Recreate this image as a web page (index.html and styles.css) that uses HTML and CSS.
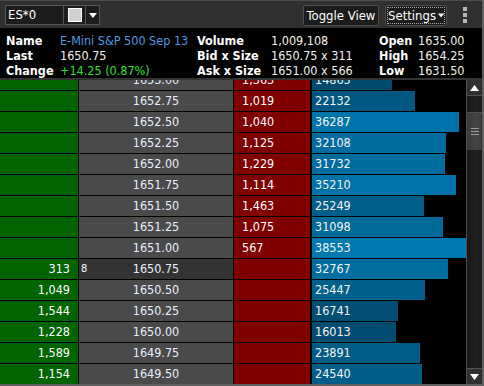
FILE: index.html
```html
<!DOCTYPE html>
<html>
<head>
<meta charset="utf-8">
<link rel="stylesheet" href="styles.css">
</head>
<body>
<div class="window">
  <div class="toolbar">
    <div class="symbol-box">
      <span class="symbol">ES*0</span>
      <span class="swatch-cell"><span class="swatch"></span></span>
      <span class="drop-cell"><svg width="8" height="5" viewBox="0 0 8 5"><path d="M0 0H8L4 5Z" fill="#fff"/></svg></span>
    </div>
    <div class="spacer"></div>
    <button class="btn toggle">Toggle View</button>
    <button class="btn settings"><span class="focus">Settings<svg width="8" height="5" viewBox="0 0 8 5"><path d="M0 0H8L4 5Z" fill="#fff"/></svg></span></button>
    <div class="kebab"><span></span><span></span><span></span></div>
  </div>
  <div class="info">
    <span class="lbl">Name</span><span class="val name">E-Mini S&amp;P 500 Sep 13</span>
    <span class="lbl">Volume</span><span class="val">1,009,108</span>
    <span class="lbl">Open</span><span class="val">1635.00</span>
    <span class="lbl">Last</span><span class="val">1650.75</span>
    <span class="lbl">Bid x Size</span><span class="val">1650.75 x 311</span>
    <span class="lbl">High</span><span class="val">1654.25</span>
    <span class="lbl">Change</span><span class="val up">+14.25 (0.87%)</span>
    <span class="lbl">Ask x Size</span><span class="val">1651.00 x 566</span>
    <span class="lbl">Low</span><span class="val">1631.50</span>
  </div>
  <div class="ladder">
    <div class="viewport">
      <div class="rows">
        <div class="bid"></div><div class="price">1653.00</div><div class="ask">1,363</div><div class="vol"><span class="bar" style="width:80px;background:rgb(0,74,110)">14865</span></div>
        <div class="bid"></div><div class="price">1652.75</div><div class="ask">1,019</div><div class="vol"><span class="bar" style="width:103px;background:rgb(0,88,130)">22132</span></div>
        <div class="bid"></div><div class="price">1652.50</div><div class="ask">1,040</div><div class="vol"><span class="bar" style="width:147px;background:rgb(0,116,170)">36287</span></div>
        <div class="bid"></div><div class="price">1652.25</div><div class="ask">1,125</div><div class="vol"><span class="bar" style="width:134px;background:rgb(0,107,158)">32108</span></div>
        <div class="bid"></div><div class="price">1652.00</div><div class="ask">1,229</div><div class="vol"><span class="bar" style="width:133px;background:rgb(0,107,157)">31732</span></div>
        <div class="bid"></div><div class="price">1651.75</div><div class="ask">1,114</div><div class="vol"><span class="bar" style="width:144px;background:rgb(0,114,167)">35210</span></div>
        <div class="bid"></div><div class="price">1651.50</div><div class="ask">1,463</div><div class="vol"><span class="bar" style="width:112px;background:rgb(0,94,139)">25249</span></div>
        <div class="bid"></div><div class="price">1651.25</div><div class="ask">1,075</div><div class="vol"><span class="bar" style="width:131px;background:rgb(0,106,155)">31098</span></div>
        <div class="bid"></div><div class="price">1651.00</div><div class="ask">567</div><div class="vol"><span class="bar" style="width:154px;background:rgb(0,120,176)">38553</span></div>
        <div class="bid">313</div><div class="price last"><span class="trade">8</span>1650.75</div><div class="ask"></div><div class="vol"><span class="bar" style="width:136px;background:rgb(0,109,160)">32767</span></div>
        <div class="bid">1,049</div><div class="price">1650.50</div><div class="ask"></div><div class="vol"><span class="bar" style="width:113px;background:rgb(0,95,139)">25447</span></div>
        <div class="bid">1,544</div><div class="price">1650.25</div><div class="ask"></div><div class="vol"><span class="bar" style="width:86px;background:rgb(0,78,115)">16741</span></div>
        <div class="bid">1,228</div><div class="price">1650.00</div><div class="ask"></div><div class="vol"><span class="bar" style="width:84px;background:rgb(0,76,113)">16013</span></div>
        <div class="bid">1,589</div><div class="price">1649.75</div><div class="ask"></div><div class="vol"><span class="bar" style="width:108px;background:rgb(0,92,135)">23891</span></div>
        <div class="bid">1,154</div><div class="price">1649.50</div><div class="ask"></div><div class="vol"><span class="bar" style="width:110px;background:rgb(0,93,137)">24540</span></div>
      </div>
    </div>
    <div class="scrollbar">
      <div class="sb-btn"><svg width="9" height="6" viewBox="0 0 9 6"><path d="M0 6H9L4.5 0Z" fill="#fff"/></svg></div>
      <div class="sb-track">
        <div class="sb-gap"></div>
        <div class="sb-thumb"><span></span><span></span><span></span></div>
      </div>
      <div class="sb-btn"><svg width="9" height="6" viewBox="0 0 9 6"><path d="M0 0H9L4.5 6Z" fill="#fff"/></svg></div>
    </div>
  </div>
</div>
</body>
</html>
```
FILE: styles.css
```css
* { box-sizing: border-box; }
html, body { margin: 0; padding: 0; background: #000; }
body {
  font-family: "DejaVu Sans Condensed", "DejaVu Sans", sans-serif;
  font-size: 12.5px;
  color: #f0f0f0;
}
.window {
  width: 484px;
  height: 386px;
  border-right: 2px solid #5e5e5e;
  border-bottom: 2px solid #5e5e5e;
  display: flex;
  flex-direction: column;
  background: #000;
}
.toolbar {
  height: 28px;
  flex: 0 0 28px;
  background: #303030;
  border-top: 1px solid #4c4c4c;
  display: flex;
  align-items: center;
  padding: 0 0 0 5px;
}
.symbol-box {
  display: flex;
  height: 20px;
  margin-top: 1px;
  border: 1px solid #555;
  background: #1c1c1c;
}
.symbol {
  width: 58px;
  padding-left: 2px;
  line-height: 18px;
  font-size: 13px;
  color: #fff;
  border-right: 1px solid #555;
}
.swatch-cell {
  width: 22px;
  display: flex;
  align-items: center;
  justify-content: center;
  border-right: 1px solid #555;
}
.swatch {
  width: 14px;
  height: 14px;
  background: #d0d0d0;
  border: 1px solid #fff;
}
.drop-cell {
  width: 13px;
  display: flex;
  align-items: center;
  justify-content: center;
}
.spacer { flex: 1; }
.btn {
  font-family: inherit;
  font-size: 13px;
  color: #fff;
  background: #1c1c1c;
  border: 1px solid #4e4e4e;
  border-radius: 2px;
  height: 21px;
  padding: 0;
  line-height: 17px;
  display: flex;
  align-items: center;
  justify-content: center;
  margin-top: 1px;
}
.btn.toggle { width: 76px; margin-right: 6px; }
.btn.settings { width: 62px; padding: 1px; margin-right: 9px; }
.focus {
  display: flex;
  align-items: center;
  justify-content: center;
  gap: 2px;
  width: 100%;
  height: 17px;
  border: 1px dotted #aaa;
}
.kebab {
  width: 18px;
  margin-right: 8px;
  display: flex;
  flex-direction: column;
  align-items: center;
  gap: 2px;
}
.kebab span {
  width: 4px;
  height: 4px;
  background: #b8b8b8;
}
.info {
  height: 52px;
  flex: 0 0 52px;
  background: #000;
  border-bottom: 2px solid #333;
  display: grid;
  grid-template-columns: 54px 137px 74px 108px 39px auto;
  grid-auto-rows: 15px;
  padding: 5px 0 0 6px;
  line-height: 15px;
  white-space: nowrap;
}
.lbl { font-weight: bold; color: #fff; }
.val { color: #f4f0e8; }
.val.name { color: #4d9be0; }
.val.up { color: #2ee02e; }
.ladder {
  flex: 1;
  display: flex;
  min-height: 0;
}
.viewport {
  width: 466px;
  flex: 0 0 466px;
  overflow: hidden;
  background: #000;
}
.rows {
  margin-top: -10px;
  display: grid;
  grid-template-columns: 78px 154px 76px 155px;
  grid-auto-rows: 20px;
  gap: 1px;
  line-height: 20px;
}
.bid {
  background: #006400;
  text-align: right;
  padding-right: 8px;
  color: #fff;
}
.price {
  background: #4a4a4a;
  text-align: center;
  color: #e8eeff;
  position: relative;
}
.price.last { background: #333; }
.trade {
  position: absolute;
  left: 2px;
  top: 0;
  font-size: 11px;
  color: #fff;
}
.ask {
  background: #800000;
  padding-left: 8px;
  color: #fff;
}
.vol { background: #000; }
.bar {
  display: block;
  height: 20px;
  margin-left: 1px;
  padding-left: 3px;
  color: #f4f4f4;
}
.scrollbar {
  width: 16px;
  flex: 0 0 16px;
  display: flex;
  flex-direction: column;
  background: #1a1a1a;
  border-left: 1px solid #505050;
}
.sb-btn {
  height: 16px;
  flex: 0 0 16px;
  display: flex;
  align-items: center;
  justify-content: center;
  background: #303030;
  border-bottom: 1px solid #505050;
}
.sb-btn:last-child {
  border-bottom: none;
  border-top: 1px solid #505050;
}
.sb-track {
  flex: 1;
  display: flex;
  flex-direction: column;
  background: linear-gradient(to right, #161616, #222 60%, #1a1a1a);
}
.sb-gap { height: 16px; }
.sb-thumb {
  height: 38px;
  background: linear-gradient(to right, #3a3a3a, #444 60%, #3a3a3a);
  border-top: 1px solid #505050;
  display: flex;
  flex-direction: column;
  align-items: center;
  justify-content: center;
  gap: 2px;
}
.sb-thumb span {
  width: 8px;
  height: 1px;
  background: #9a9a9a;
}
```
